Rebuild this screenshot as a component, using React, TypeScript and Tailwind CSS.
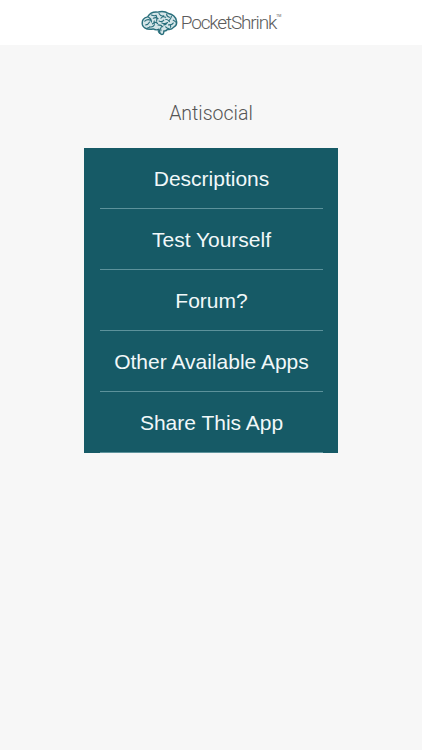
const items = ["Descriptions", "Test Yourself", "Forum?", "Other Available Apps", "Share This App"];

function BrainLogo() {
  return (
    <svg width="37" height="26" viewBox="0 0 39 26" fill="#d5e5e8" stroke="#2a6f7c" strokeLinecap="round" strokeLinejoin="round">
      <path strokeWidth="1.5" d="M1.500 15C.5 10.500 3 7 7 6.500 9 3 13 1 17.500 1.500 21 .5 26 .8 29 3c4 .8 7.500 3.500 8.300 7.500.8 3-.3 5.500-2.800 6.800-1.500 2-4 2.800-6.500 2.300-1 1.500-2.500 2-4 1.700.2 1.500 0 2.500-.8 3.500-1 .5-2.300.2-3-.8-.7-1.500-1-3-1.200-4.500-2 1-4.500.8-6.200-.2C7.500 20 3 19 1.500 15Z" />
      <path fill="none" strokeWidth="1.2" d="M4 11c2-2 4-2 6-1M5 15c2 0 3-1 4-3M8 7c2 1 3 2 3 5M11 4.500c2 1 3.500 1 5 .5M13 8c2-1 3.500-1 5 .5M12 14c2-2 4-2 5.500-.5M9 17c2 .5 4 0 5-2M16 5c1 2 1 4 .5 6M19 3c1 2 3 3 5 2.500M21 8c1-1.500 3-2 5-1M19 11c2 1 4 .5 5-1M18 15c2 0 4 .5 5 2M22 13c2 1 4 1 6-.5M26 9c2 0 3 1 4 2.500M27 3.500c0 2 1 3 3 3.500M32 6c0 2-1 3-2 4M29 15c2 0 4 0 5-2M26 17c1 1 2 2 3.500 2M34 10c1 .5 2 1 2.500 2M21 21c-.5-1.500-.5-3 .5-4M18 20c0 1.500 .5 3 1.500 4M6 19c1-1 2-1.500 3-1.500M14 11c-.5 1-.5 2 0 3M24 15c1 0 2-.5 3-1.500M31 15c.5 1 .5 1.500 0 2.500" />
    </svg>
  );
}

export default function App() {
  return (
    <div className="flex h-[750px] w-[422px] flex-col bg-[#f7f7f7] font-['Liberation_Sans',sans-serif]">
      <header className="flex h-[45px] items-center justify-center bg-white">
        <BrainLogo />
        <span className="ml-[3px] font-['Roboto',sans-serif] text-[19px] font-light leading-none tracking-[-1.15px] text-[#5c5c5c]">
          PocketShrink
        </span>
        <span className="mb-[12px] font-['Roboto',sans-serif] text-[3.5px] leading-none text-[#5c5c5c]">TM</span>
      </header>
      <h1 className="mt-[56px] text-center font-['Roboto',sans-serif] text-[19.5px] font-light leading-[26px] text-[#555555]">
        Antisocial
      </h1>
      <nav className="mx-auto mt-[21px] w-[254px] bg-[#165a66] pl-4 pr-[15px]">
        {items.map((item, i) => (
          <div
            key={item}
            className={
              i < items.length - 1
                ? "flex h-[61px] items-center justify-center border-b border-[#5c929b] pt-[2px] text-[21px] text-[#f1f8f9]"
                : "flex h-[61px] items-center justify-center border-b border-[#5f949d] pt-[2px] text-[21px] text-[#f1f8f9]"
            }
          >
            {item}
          </div>
        ))}
      </nav>
    </div>
  );
}
